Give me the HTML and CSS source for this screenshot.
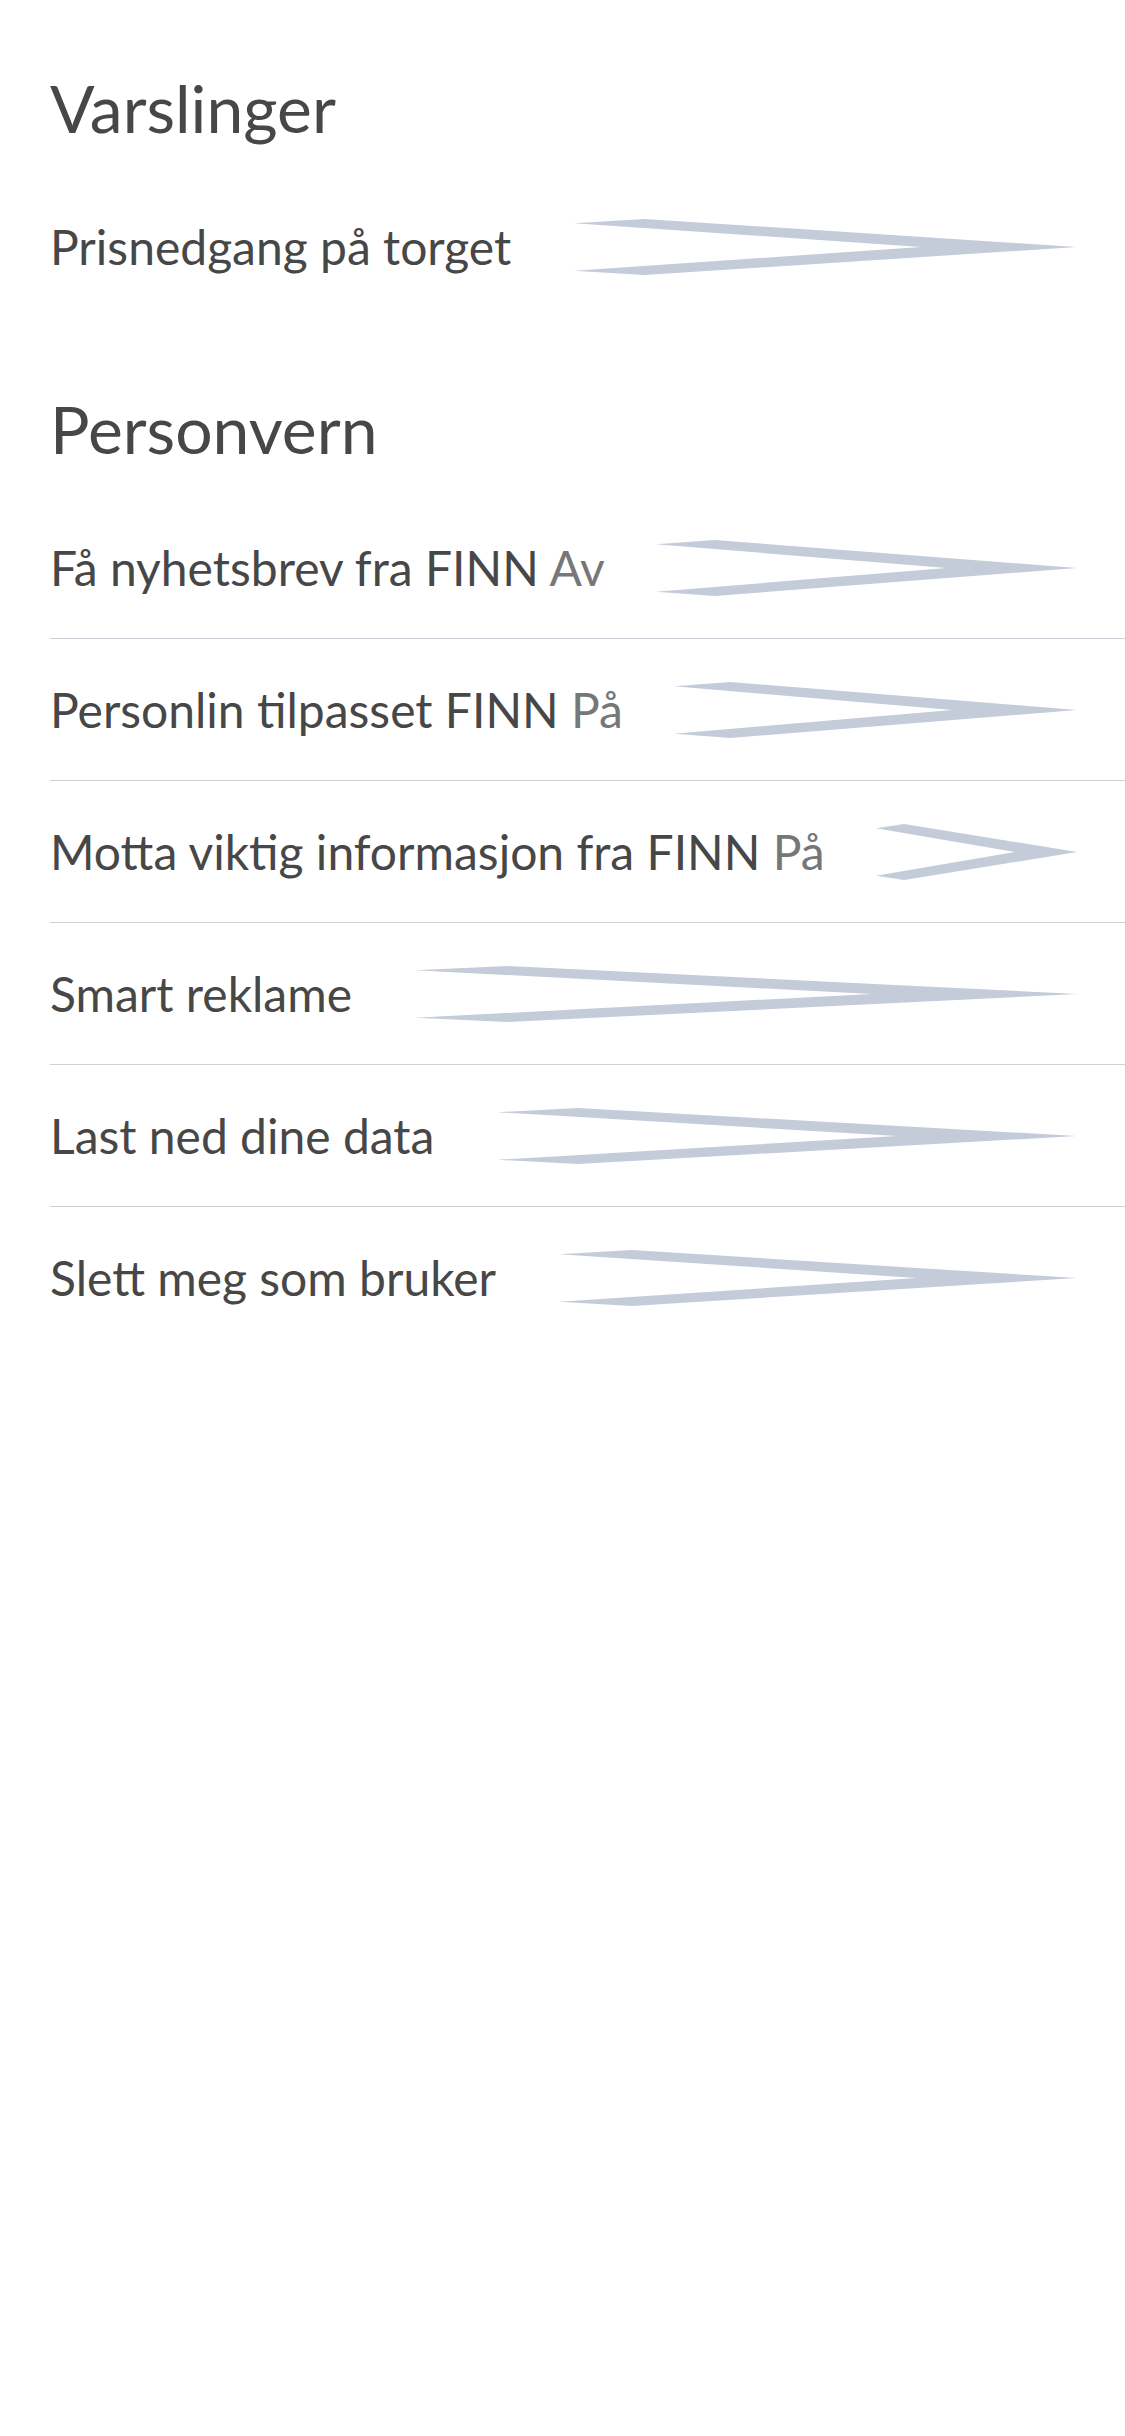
FILE: index.html
```html
<!DOCTYPE html>
<html lang="no">
<head>
<meta charset="utf-8">
<title>Innstillinger</title>
<link rel="stylesheet" href="styles.css">
</head>
<body>
<main class="page">
  <section class="group">
    <h2 class="group-title">Varslinger</h2>
    <ul class="list">
      <li class="item">
        <span class="label">Prisnedgang på torget</span>
        <svg class="chev" viewBox="0 0 100 100" preserveAspectRatio="none" aria-hidden="true"><polygon points="0,7.5 14,0 100,50 14,100 0,92.5 69,50"/></svg>
      </li>
    </ul>
  </section>
  <section class="group">
    <h2 class="group-title">Personvern</h2>
    <ul class="list">
      <li class="item">
        <span class="label">Få nyhetsbrev fra FINN <span class="status">Av</span></span>
        <svg class="chev chev-status" viewBox="0 0 100 100" preserveAspectRatio="none" aria-hidden="true"><polygon points="0,7.5 14,0 100,50 14,100 0,92.5 69,50"/></svg>
      </li>
      <li class="item">
        <span class="label">Personlin tilpasset FINN <span class="status">På</span></span>
        <svg class="chev chev-status" viewBox="0 0 100 100" preserveAspectRatio="none" aria-hidden="true"><polygon points="0,7.5 14,0 100,50 14,100 0,92.5 69,50"/></svg>
      </li>
      <li class="item">
        <span class="label">Motta viktig informasjon fra FINN <span class="status">På</span></span>
        <svg class="chev chev-status" viewBox="0 0 100 100" preserveAspectRatio="none" aria-hidden="true"><polygon points="0,7.5 14,0 100,50 14,100 0,92.5 69,50"/></svg>
      </li>
      <li class="item">
        <span class="label">Smart reklame</span>
        <svg class="chev" viewBox="0 0 100 100" preserveAspectRatio="none" aria-hidden="true"><polygon points="0,7.5 14,0 100,50 14,100 0,92.5 69,50"/></svg>
      </li>
      <li class="item">
        <span class="label">Last ned dine data</span>
        <svg class="chev" viewBox="0 0 100 100" preserveAspectRatio="none" aria-hidden="true"><polygon points="0,7.5 14,0 100,50 14,100 0,92.5 69,50"/></svg>
      </li>
      <li class="item">
        <span class="label">Slett meg som bruker</span>
        <svg class="chev" viewBox="0 0 100 100" preserveAspectRatio="none" aria-hidden="true"><polygon points="0,7.5 14,0 100,50 14,100 0,92.5 69,50"/></svg>
      </li>
    </ul>
  </section>
</main>
</body>
</html>
```

FILE: styles.css
```css
html, body {
  margin: 0;
  padding: 0;
  background: #ffffff;
}

body {
  font-family: Lato, "Noto Sans", "Liberation Sans", sans-serif;
  color: #474747;
  width: 1125px;
  min-height: 2436px;
}

.page {
  padding-top: 68px;
  display: flex;
  flex-direction: column;
  gap: 72px;
}

.group {
  display: flex;
  flex-direction: column;
}

.group-title {
  margin: 0 0 28px 50px;
  font-size: 66px;
  line-height: 80px;
  font-weight: 400;
  color: #474747;
}

.list {
  list-style: none;
  margin: 0 0 0 50px;
  padding: 0;
}

.item {
  display: flex;
  align-items: center;
  height: 141px;
  padding-right: 48px;
  font-size: 48px;
  line-height: 60px;
}

.item + .item {
  border-top: 1px solid #cbd2da;
}

.label {
  white-space: nowrap;
  color: #474747;
}

.status {
  color: #777777;
}

.chev {
  flex: 1 1 auto;
  height: 56px;
  margin-left: 63px;
  fill: #c3ccd8;
}

.chev-status {
  margin-left: 51px;
}
```
